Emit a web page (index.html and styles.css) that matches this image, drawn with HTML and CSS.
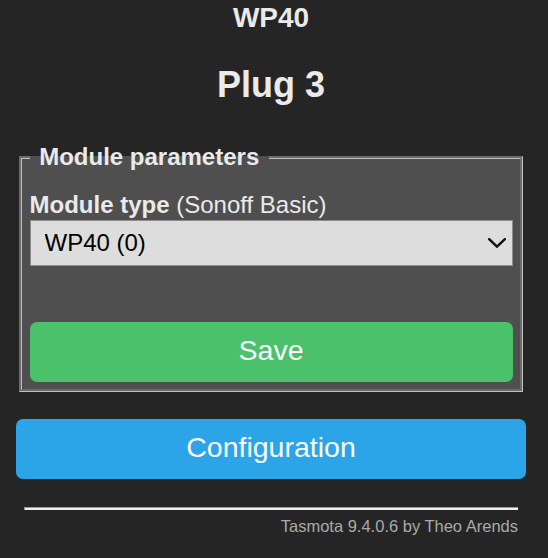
FILE: index.html
```html
<!DOCTYPE html>
<html lang="en">
<head>
<meta charset="utf-8">
<title>WP40 - Configure Module</title>
<link rel="stylesheet" href="styles.css">
</head>
<body>
<div class="wrap">
  <div class="header">
    <h3 class="device">WP40</h3>
    <h2 class="friendly">Plug 3</h2>
  </div>
  <fieldset class="panel">
    <legend class="panel-title">&nbsp;Module parameters&nbsp;</legend>
    <form class="panel-form">
      <div class="field-label"><b>Module type</b> (Sonoff Basic)</div>
      <div class="select-wrap">
        <select class="select">
          <option>WP40 (0)</option>
        </select>
        <svg class="chevron" width="18" height="10" viewBox="0 0 18 10" aria-hidden="true">
          <path d="M1.2 1.2 L9 8.6 L16.8 1.2" fill="none" stroke="#111" stroke-width="2.4" stroke-linecap="square" stroke-linejoin="miter"/>
        </svg>
      </div>
      <button type="button" class="btn btn-green">Save</button>
    </form>
  </fieldset>
  <button type="button" class="btn btn-blue btn-config">Configuration</button>
  <div class="footer">
    <hr class="rule">
    <a class="credit" href="#">Tasmota 9.4.0.6 by Theo Arends</a>
  </div>
</div>
</body>
</html>
```
FILE: styles.css
```css
html, body {
  margin: 0;
  padding: 0;
  background: #252525;
}
body {
  font-family: "Liberation Sans", Arial, sans-serif;
  font-size: 24px;
  color: #eaeaea;
}
.wrap {
  width: 510px;
  margin-left: 16px;
  text-align: left;
}
.header {
  text-align: center;
  padding-top: 2px;
}
.device {
  font-size: 28px;
  font-weight: bold;
  line-height: normal;
  margin: 0 0 30px;
}
.friendly {
  font-size: 36px;
  font-weight: bold;
  line-height: normal;
  margin: 0 0 37.4px;
}
.panel {
  margin: 0 3px;
  padding: 0 7.5px 7px;
  border: 3px groove #c0c0c0;
  background: #4f4f4f;
  min-width: 0;
}
.panel-title {
  padding: 0 3px;
  font-weight: bold;
  font-size: 24px;
  line-height: normal;
}
.panel-form {
  margin: 0;
  padding-top: 7.5px;
}
.field-label {
  margin-top: 12px;
  line-height: normal;
}
.select-wrap {
  position: relative;
  margin-top: 1px;
}
.select {
  display: block;
  width: 100%;
  height: 46px;
  box-sizing: border-box;
  -webkit-appearance: none;
  appearance: none;
  margin: 0;
  padding: 0 40px 0 14px;
  border: 1px solid #8c8c8c;
  border-radius: 0;
  background: #dddddd;
  color: #000;
  font-family: "Liberation Sans", Arial, sans-serif;
  font-size: 24px;
}
.chevron {
  position: absolute;
  right: 7px;
  top: 18px;
}
.btn {
  display: block;
  width: 100%;
  height: 60px;
  border: 0;
  border-radius: 7px;
  padding: 0 0 3px;
  color: #faffff;
  font-family: "Liberation Sans", Arial, sans-serif;
  font-size: 28.5px;
  line-height: 57px;
  text-align: center;
  cursor: pointer;
}
.btn-green {
  margin-top: 56px;
  background: #4ac16a;
}
.btn-blue {
  background: #2ca4e8;
}
.btn-config {
  margin-top: 27px;
}
.footer {
  text-align: right;
  font-size: 16.5px;
  padding: 0 8px;
}
.rule {
  margin: 28px 0 7px;
  height: 3px;
  box-sizing: border-box;
  border: 0;
  border-top: 1px solid #9a9a9a;
  border-left: 1px solid #9a9a9a;
  background: #eeeeee;
}
.credit {
  color: #aaaaaa;
  text-decoration: none;
  line-height: normal;
}
```
